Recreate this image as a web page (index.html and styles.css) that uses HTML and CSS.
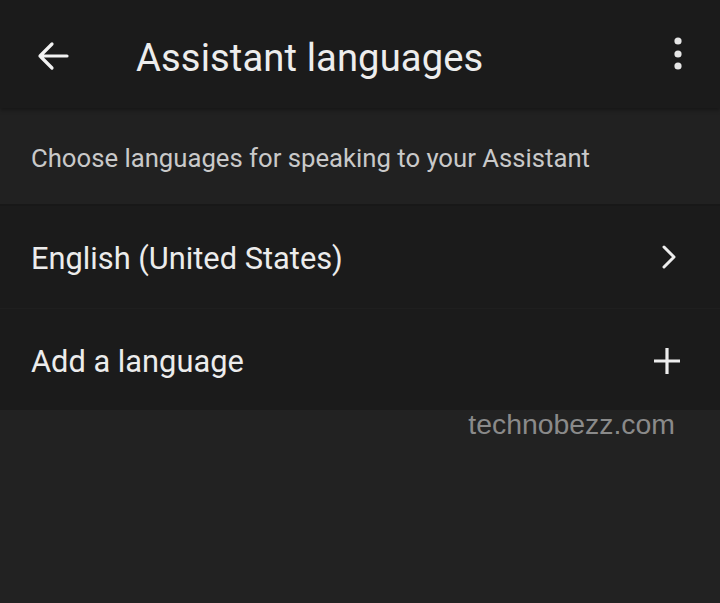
FILE: index.html
```html
<!DOCTYPE html>
<html lang="en">
<head>
  <meta charset="UTF-8">
  <title>Assistant languages</title>
  <link rel="stylesheet" href="styles.css">
</head>
<body>
  <div class="app">
    <header class="topbar">
      <button class="icon-btn back" aria-label="Back">
        <svg width="34" height="34" viewBox="0 0 34 34"><path d="M31 17H4M16 5L4 17l12 12" fill="none" stroke="#f2f2f2" stroke-width="3.2" stroke-linecap="round" stroke-linejoin="round"/></svg>
      </button>
      <h1 class="title">Assistant languages</h1>
      <button class="icon-btn more" aria-label="More options">
        <svg width="10" height="34" viewBox="0 0 10 34"><circle cx="5" cy="4" r="3.6" fill="#e6e6e6"/><circle cx="5" cy="17" r="3.6" fill="#e6e6e6"/><circle cx="5" cy="29" r="3.6" fill="#e6e6e6"/></svg>
      </button>
    </header>

    <p class="intro">Choose languages for speaking to your Assistant</p>

    <ul class="lang-list">
      <li class="lang-row">
        <span>English (United States)</span>
        <svg class="chevron" width="16" height="26" viewBox="0 0 16 26"><path d="M3 3l10 10L3 23" fill="none" stroke="#ededed" stroke-width="3" stroke-linecap="round" stroke-linejoin="round"/></svg>
      </li>
      <li class="lang-row">
        <span>Add a language</span>
        <svg width="28" height="28" viewBox="0 0 28 28"><path d="M14 1v26M1 14h26" fill="none" stroke="#ededed" stroke-width="3.2"/></svg>
      </li>
    </ul>

    <div class="watermark">technobezz.com</div>
  </div>
</body>
</html>
```

FILE: styles.css
```css
body {
  margin: 0;
  background: #222222;
  font-family: Roboto, "Noto Sans", sans-serif;
  color: #ececec;
}
.app {
  width: 720px;
  height: 603px;
  overflow: hidden;
}
.topbar {
  height: 108px;
  box-sizing: border-box;
  background: #1b1b1b;
  display: flex;
  align-items: center;
  padding: 8px 0 0 36px;
  box-shadow: 0 2px 4px rgba(0, 0, 0, 0.35);
  position: relative;
}
.icon-btn {
  background: none;
  border: none;
  padding: 0;
  display: flex;
  align-items: center;
}
.back {
  margin-right: 66px;
  margin-top: -5px;
}
.title {
  flex: 1;
  margin: 0;
  font-size: 38.2px;
  font-weight: 400;
  color: #ededed;
  letter-spacing: 0.1px;
}
.more {
  margin-right: 37px;
  margin-top: -8px;
}
.intro {
  margin: 0;
  height: 98px;
  box-sizing: border-box;
  padding: 3px 31px 0;
  display: flex;
  align-items: center;
  background: #212121;
  font-size: 25.7px;
  color: #c9c9c9;
  border-bottom: 2px solid #181818;
}
.lang-list {
  list-style: none;
  margin: 0;
  padding: 0;
  background: #1b1b1b;
}
.lang-row {
  height: 102px;
  box-sizing: border-box;
  display: flex;
  align-items: center;
  justify-content: space-between;
  padding: 3px 43px 0 31px;
  font-size: 30.8px;
  color: #ececec;
}
.chevron {
  margin-top: -4px;
}
.lang-row + .lang-row {
  border-top: 1px solid #1f1f1f;
  padding-right: 39px;
}
.watermark {
  text-align: right;
  padding-right: 45px;
  font-family: "Liberation Sans", Arial, sans-serif;
  font-size: 28.4px;
  color: #8a8a8a;
  line-height: 28px;
  margin-top: 0;
}
```
